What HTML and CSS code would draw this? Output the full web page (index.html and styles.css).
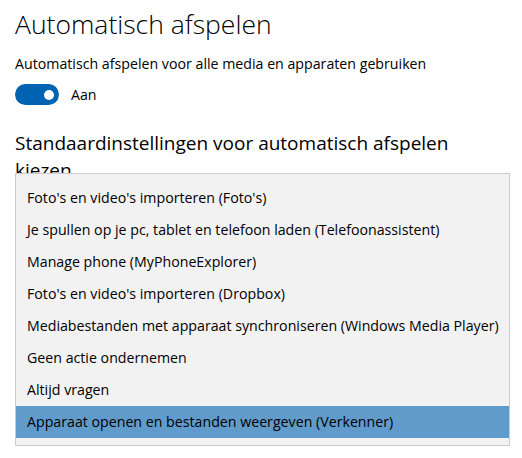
FILE: index.html
```html
<!DOCTYPE html>
<html lang="nl">
<head>
  <meta charset="UTF-8" />
  <meta name="viewport" content="width=device-width, initial-scale=1.0" />
  <title>Automatisch afspelen</title>
  <link rel="stylesheet" href="styles.css">
</head>
<body>

  <h1>Automatisch afspelen</h1>

  <!-- Hoofdschakelaar -->
  <p class="label">Automatisch afspelen voor alle media en apparaten gebruiken</p>
  <div class="toggle-row">
    <span class="toggle on"><span class="knob"></span></span>
    <span class="toggle-text">Aan</span>
  </div>

  <!-- Standaardinstellingen -->
  <div class="section">
    <h2>Standaardinstellingen voor automatisch afspelen kiezen</h2>

    <ul class="dropdown">
      <li>Foto's en video's importeren (Foto's)</li>
      <li>Je spullen op je pc, tablet en telefoon laden (Telefoonassistent)</li>
      <li>Manage phone (MyPhoneExplorer)</li>
      <li>Foto's en video's importeren (Dropbox)</li>
      <li>Mediabestanden met apparaat synchroniseren (Windows Media Player)</li>
      <li>Geen actie ondernemen</li>
      <li>Altijd vragen</li>
      <li class="selected">Apparaat openen en bestanden weergeven (Verkenner)</li>
    </ul>
  </div>

</body>
</html>
```

FILE: styles.css
```css
html, body {
  height: 100%;
}

body {
  font-family: 'Segoe UI', 'Open Sans', sans-serif;
  margin: 0;
  padding: 0 15px;
  box-sizing: border-box;
  min-height: 458px;
  background: #fff;
  color: #000;
}

h1 {
  font-size: 26.5px;
  font-weight: 300;
  margin: 6px 0 0;
  line-height: 36px;
}

.label {
  font-size: 14.2px;
  margin: 12px 0 0;
  line-height: 20px;
}

.toggle-row {
  display: flex;
  align-items: center;
  gap: 12px;
  margin-top: 10px;
  font-size: 14.2px;
}

.toggle {
  width: 44px;
  height: 21px;
  border-radius: 11px;
  background-color: #0063b1;
  display: flex;
  align-items: center;
  justify-content: flex-end;
  box-sizing: border-box;
  padding-right: 5px;
}

.knob {
  width: 10px;
  height: 10px;
  border-radius: 50%;
  background-color: #fff;
}

.section {
  position: relative;
  margin-top: 25px;
  width: 470px;
}

h2 {
  font-size: 19px;
  font-weight: 400;
  line-height: 27px;
  margin: 0;
}

.dropdown {
  position: absolute;
  top: 43px;
  left: 0;
  width: 495px;
  box-sizing: border-box;
  list-style: none;
  margin: 0;
  padding: 8px 0 7px;
  background-color: #f2f2f2;
  border: 1px solid #ccc;
  font-size: 14.2px;
}

.dropdown li {
  height: 32px;
  line-height: 32px;
  padding: 0 11px;
  white-space: nowrap;
}

.dropdown li.selected {
  background-color: #619bcc;
}
```
